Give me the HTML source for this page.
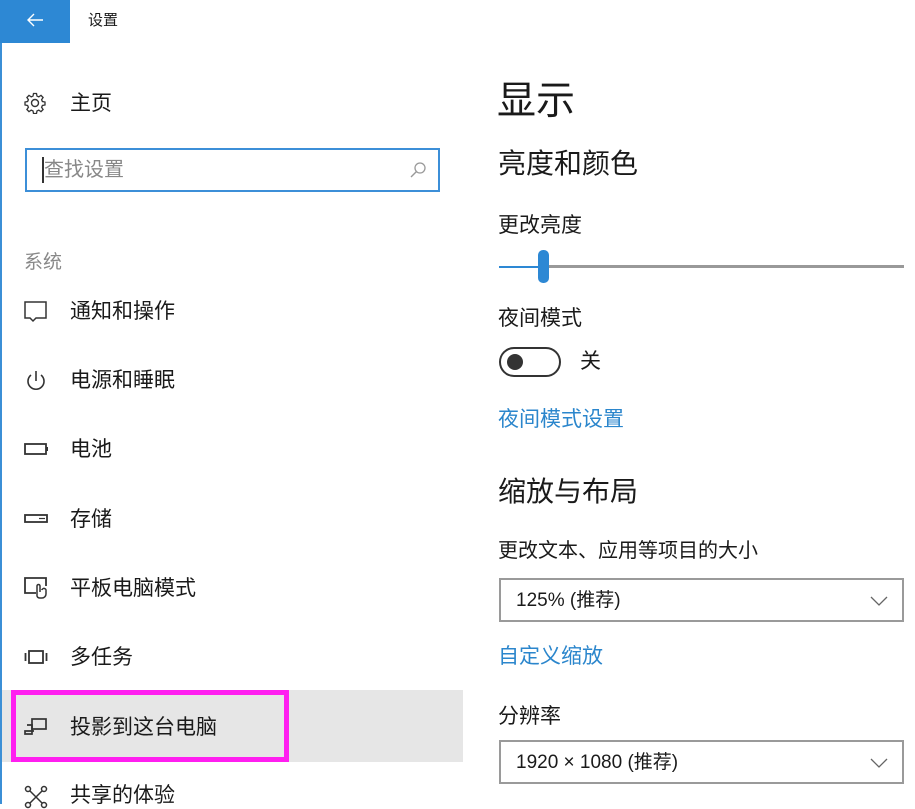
<!DOCTYPE html>
<html><head><meta charset="utf-8"><style>
*{margin:0;padding:0;box-sizing:border-box}
body{width:915px;height:804px;overflow:hidden;background:#fff;position:relative;font-family:"Liberation Sans","Noto Sans CJK SC",sans-serif;color:#1a1a1a}
.a{position:absolute;white-space:nowrap;line-height:1}
.ic{position:absolute;left:24px}
.it{position:absolute;left:70px;font-size:21px;line-height:1}
.lnk{color:#2b86cc}
.dd{position:absolute;left:499px;width:405px;height:44px;border:2px solid #9a9a9a;font-size:19px;padding-left:15px;line-height:42px}
.dd svg{position:absolute;right:14px;top:15px}
</style></head><body>
<div class="a" style="left:0;top:0;width:2px;height:804px;background:#3b8fd6"></div>
<div class="a" style="left:0;top:0;width:70px;height:43px;background:#2d88d4"></div>
<svg class="a" style="left:25px;top:12px" width="20" height="16" viewBox="0 0 20 16"><path d="M18 8H3M9 2L3 8l6 6" stroke="#fff" stroke-width="1.4" fill="none"/></svg>
<div class="a" style="left:88px;top:13px;font-size:15px">设置</div>

<svg class="ic" style="top:92px" width="22" height="22" viewBox="0 0 22 22"><circle cx="11" cy="11" r="3.5" fill="none" stroke="#333" stroke-width="1.4"/><path d="M9.5 1.5h3l.5 2.6 1.8.8 2.2-1.5 2.1 2.1-1.5 2.2.8 1.8 2.6.5v3l-2.6.5-.8 1.8 1.5 2.2-2.1 2.1-2.2-1.5-1.8.8-.5 2.6h-3l-.5-2.6-1.8-.8-2.2 1.5-2.1-2.1 1.5-2.2-.8-1.8-2.6-.5v-3l2.6-.5.8-1.8-1.5-2.2 2.1-2.1 2.2 1.5 1.8-.8z" fill="none" stroke="#333" stroke-width="1.3"/></svg>
<div class="it" style="top:93px">主页</div>

<div class="a" style="left:25px;top:148px;width:415px;height:44px;border:2px solid #3c8fd8"></div>
<div class="a" style="left:42px;top:157px;width:1.5px;height:26px;background:#333"></div>
<div class="a" style="left:44px;top:160px;font-size:20px;color:#888">查找设置</div>
<svg class="a" style="left:408px;top:160px" width="20" height="20" viewBox="0 0 20 20"><circle cx="12" cy="8" r="5" fill="none" stroke="#999" stroke-width="1.3"/><path d="M8.5 11.5L3 17" stroke="#999" stroke-width="1.4"/></svg>

<div class="a" style="left:24px;top:253px;font-size:19px;color:#888">系统</div>

<svg class="ic" style="top:300px" width="24" height="24" viewBox="0 0 24 24"><path d="M1 2h21v16H12l-3 3-3-3H1z" fill="none" stroke="#333" stroke-width="1.5"/></svg>
<div class="it" style="top:301px">通知和操作</div>

<svg class="ic" style="top:369px" width="24" height="24" viewBox="0 0 24 24"><path d="M7 6a8 8 0 1 0 10 0" fill="none" stroke="#333" stroke-width="1.6"/><path d="M12 2v10" stroke="#333" stroke-width="1.6"/></svg>
<div class="it" style="top:370px">电源和睡眠</div>

<svg class="ic" style="top:441px" width="24" height="16" viewBox="0 0 24 16"><rect x="1" y="3" width="21" height="10" fill="none" stroke="#333" stroke-width="1.8"/><rect x="22" y="6" width="2" height="4" fill="#333"/></svg>
<div class="it" style="top:439px">电池</div>

<svg class="ic" style="top:511px" width="24" height="16" viewBox="0 0 24 16"><rect x="1" y="4" width="22" height="7" fill="none" stroke="#333" stroke-width="1.8"/><path d="M15 7.5h6" stroke="#333" stroke-width="1.2"/></svg>
<div class="it" style="top:509px">存储</div>

<svg class="ic" style="top:576px" width="24" height="24" viewBox="0 0 24 24"><path d="M12 17H1V2h21v8" fill="none" stroke="#333" stroke-width="1.8"/><path d="M13 10v10a3 3 0 0 0 3 2h2a4 4 0 0 0 4-4v-3a2 2 0 0 0-4-1v-1M13 10a1.5 1.5 0 0 1 3 0v6" fill="none" stroke="#333" stroke-width="1.5"/></svg>
<div class="it" style="top:578px">平板电脑模式</div>

<svg class="ic" style="top:648px" width="24" height="20" viewBox="0 0 24 20"><rect x="5" y="3" width="14" height="12" fill="none" stroke="#333" stroke-width="1.8"/><path d="M1.5 5v8M22.5 5v8" stroke="#333" stroke-width="1.8"/></svg>
<div class="it" style="top:647px">多任务</div>

<div class="a" style="left:2px;top:690px;width:461px;height:72px;background:#e6e6e6"></div>
<div class="a" style="left:11px;top:690px;width:278px;height:72px;border:5px solid #ff1ff0"></div>
<svg class="ic" style="top:716px" width="24" height="22" viewBox="0 0 24 22"><rect x="8" y="3" width="14" height="10" fill="none" stroke="#333" stroke-width="1.7"/><path d="M3 9h5v9H1v-3h9" fill="none" stroke="#333" stroke-width="1.7"/></svg>
<div class="it" style="top:717px">投影到这台电脑</div>

<svg class="ic" style="top:785px" width="24" height="24" viewBox="0 0 24 24"><circle cx="4" cy="4" r="2.5" fill="none" stroke="#333" stroke-width="1.5"/><circle cx="20" cy="4" r="2.5" fill="none" stroke="#333" stroke-width="1.5"/><circle cx="4" cy="20" r="2.5" fill="none" stroke="#333" stroke-width="1.5"/><circle cx="20" cy="20" r="2.5" fill="none" stroke="#333" stroke-width="1.5"/><path d="M6 6l12 12M18 6L6 18" stroke="#333" stroke-width="1.5"/></svg>
<div class="it" style="top:785px">共享的体验</div>

<div class="a" style="left:497px;top:82px;font-size:39px">显示</div>
<div class="a" style="left:498px;top:150px;font-size:28px">亮度和颜色</div>
<div class="a" style="left:498px;top:215px;font-size:21px">更改亮度</div>
<div class="a" style="left:499px;top:266px;width:42px;height:2px;background:#2d88d4"></div>
<div class="a" style="left:545px;top:265px;width:359px;height:3px;background:#999"></div>
<div class="a" style="left:538px;top:250px;width:11px;height:33px;border-radius:5px;background:#2d88d4"></div>
<div class="a" style="left:498px;top:308px;font-size:21px">夜间模式</div>
<div class="a" style="left:499px;top:347px;width:62px;height:30px;border:2px solid #333;border-radius:15px"></div>
<div class="a" style="left:507px;top:354px;width:16px;height:16px;border-radius:50%;background:#333"></div>
<div class="a" style="left:580px;top:351px;font-size:21px">关</div>
<div class="a lnk" style="left:498px;top:409px;font-size:21px">夜间模式设置</div>
<div class="a" style="left:498px;top:478px;font-size:28px">缩放与布局</div>
<div class="a" style="left:498px;top:541px;font-size:20px">更改文本、应用等项目的大小</div>
<div class="dd" style="top:578px">125% (推荐)<svg width="18" height="12" viewBox="0 0 18 12"><path d="M1 2l8 8 8-8" fill="none" stroke="#666" stroke-width="1.3"/></svg></div>
<div class="a lnk" style="left:498px;top:646px;font-size:21px">自定义缩放</div>
<div class="a" style="left:498px;top:706px;font-size:21px">分辨率</div>
<div class="dd" style="top:740px">1920 × 1080 (推荐)<svg width="18" height="12" viewBox="0 0 18 12"><path d="M1 2l8 8 8-8" fill="none" stroke="#666" stroke-width="1.3"/></svg></div>
</body></html>
